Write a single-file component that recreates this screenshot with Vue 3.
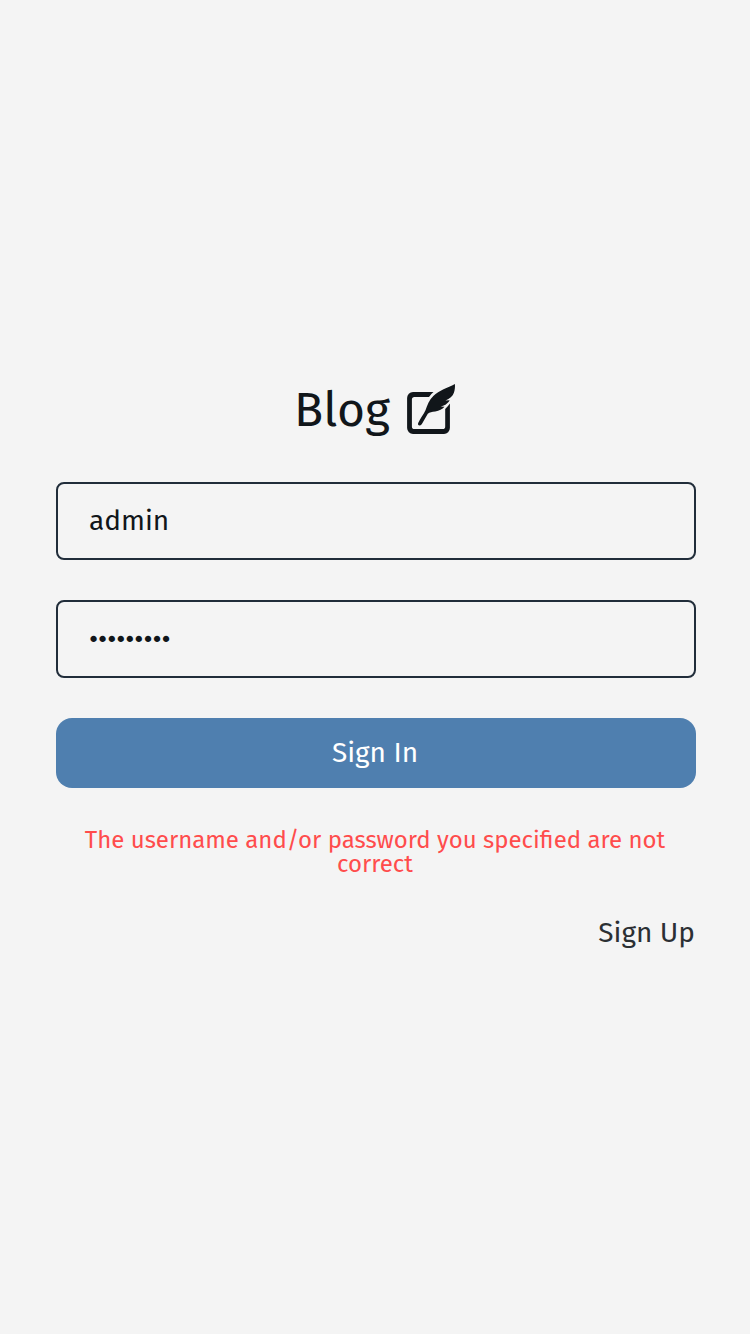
<script setup>
import { ref } from 'vue'

const username = ref('admin')
const password = ref('secret123')
const error = ref('The username and/or password you specified are not correct')
</script>

<template>
  <main class="page">
    <form class="login" @submit.prevent>
      <h1 class="brand">
        <span class="brand-name">Blog</span>
        <svg class="brand-icon" viewBox="0 0 60 60" aria-hidden="true">
          <path class="frame" d="M33.500 14H13A6 6 0 0 0 7.100 20V50A6 6 0 0 0 13 55.900H44A6 6 0 0 0 49.900 50V25.500L48 28L45.200 31V48.500Q45.200 51.100 42.500 51.100H14.500Q11.900 51.100 11.900 48.500V21.500Q11.900 18.900 14.500 18.900H29Q31 16 33.500 14Z" />
          <path class="feather" d="M54.9 6C47.500 10.200 39.200 11.900 33.300 18C29 22.400 27.300 27.200 25.500 32.200C23.500 36.500 20.200 40.500 18.200 44.900C17.500 46.400 18.400 47.500 19.700 47.400C21 47.300 21.700 46.400 22.300 45.300L27.800 35.800C29.600 33.700 32 34.100 35.300 33.400C39.200 32.600 42.300 31.400 44.500 28.800L40.500 28.500C44 27.900 47.300 26.400 49.700 22.300L45.500 22.600C49.700 20.700 52.700 18.600 53.900 14.800C54.800 12 55.200 9 54.900 6Z" />
        </svg>
      </h1>
      <input v-model="username" class="field" type="text">
      <input v-model="password" class="field" type="password">
      <button class="submit" type="submit">Sign In</button>
      <p class="error">{{ error }}</p>
      <a class="signup">Sign Up</a>
    </form>
  </main>
</template>

<style>
body {
  background: #f4f4f4;
}
</style>

<style scoped>
.page {
  box-sizing: border-box;
  min-height: 1334px;
  padding: 378px 54px 0 56px;
  background: #f4f4f4;
  color: #11161a;
  font-family: "Fira Sans", "Noto Sans", sans-serif;
}
.login {
  display: flex;
  flex-direction: column;
}
.brand {
  display: flex;
  align-items: center;
  height: 60px;
  margin: 0 0 44px 238px;
  font-size: 48px;
  font-weight: 400;
  line-height: 60px;
}
.brand-name {
  width: 106px;
  padding-top: 4px;
}
.brand-icon {
  width: 60px;
  height: 60px;
}
.frame,
.feather {
  fill: #11161a;
}
.field {
  box-sizing: border-box;
  width: 100%;
  height: 78px;
  margin: 0 0 40px;
  padding: 0 31px 2px;
  border: 2px solid #212d3a;
  border-radius: 8px;
  outline: none;
  background: transparent;
  color: #11161a;
  font: 400 28px "Fira Sans", "Noto Sans", sans-serif;
}
.submit {
  height: 70px;
  margin: 0;
  padding: 0 2px 0 0;
  border: 0;
  border-radius: 16px;
  background: #4f7faf;
  color: #fff;
  font: 400 28px/70px "Fira Sans", "Noto Sans", sans-serif;
}
.error {
  margin: 40px 0 0;
  padding-right: 2px;
  color: #ff4c4c;
  font-size: 24px;
  line-height: 24px;
  text-align: center;
}
.signup {
  align-self: flex-end;
  margin: 40px 1px 0 0;
  color: #2b2f33;
  font-size: 28px;
  line-height: 34px;
}
</style>
